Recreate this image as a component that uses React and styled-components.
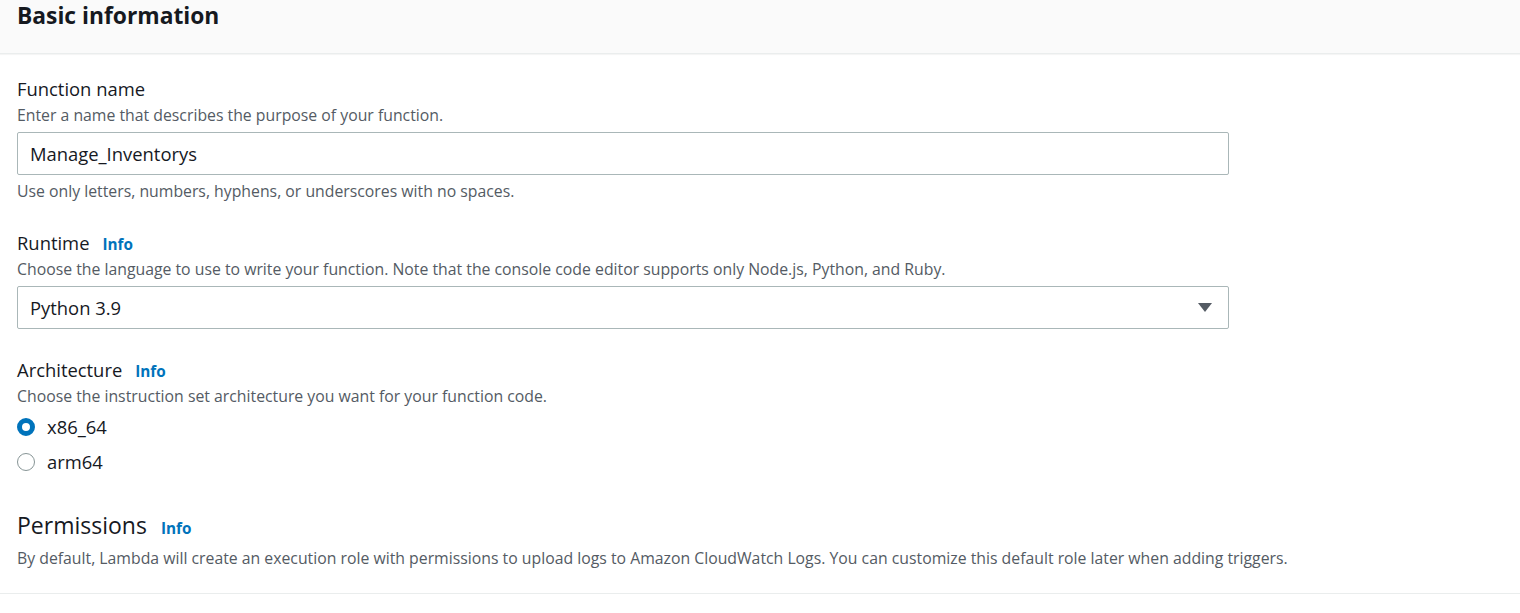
import styled, { createGlobalStyle } from "styled-components";

const Global = createGlobalStyle`
  body {
    margin: 0;
    background: #fff;
    font-family: "Open Sans", "Noto Sans", sans-serif;
    color: #16191f;
  }
`;

const Panel = styled.section`
  width: 1520px;
  border-bottom: 1px solid #eaeded;
`;

const Header = styled.header`
  height: 54px;
  background: #fafafa;
  border-bottom: 1px solid #eaeded;
  box-shadow: 0 1px 1px rgba(0, 0, 0, 0.04);
  padding: 0 17px;
  box-sizing: border-box;
`;

const Title = styled.h2`
  margin: 0;
  padding-top: 1px;
  font-size: 22.8px;
  font-weight: 700;
  line-height: 29px;
  color: #16191f;
`;

const Body = styled.div`
  padding: 22px 17px 25px;
  display: flex;
  flex-direction: column;
`;

const Field = styled.div`
  display: flex;
  flex-direction: column;
  margin-bottom: ${(p) => p.gap || 0}px;
`;

const LabelRow = styled.div`
  display: flex;
  align-items: baseline;
  gap: ${(p) => (p.big ? 14 : 13)}px;
`;

const Label = styled.label`
  font-size: ${(p) => (p.big ? 23 : 18.4)}px;
  line-height: ${(p) => (p.big ? 32 : 26)}px;
  color: #16191f;
`;

const Info = styled.a`
  font-size: 15.3px;
  font-weight: 700;
  color: #0073bb;
  text-decoration: none;
`;

const Hint = styled.div`
  font-size: 15.8px;
  line-height: 20px;
  color: #545b64;
  margin-top: ${(p) => p.top ?? 3}px;
`;

const Box = styled.div`
  margin-top: 7px;
  width: 1212px;
  height: 43px;
  box-sizing: border-box;
  border: 1px solid #aab7b8;
  border-radius: 2px;
  padding: 0 16px 0 12px;
  display: flex;
  align-items: center;
  justify-content: space-between;
  font-size: 18.4px;
  color: #16191f;
`;

const Radios = styled.div`
  display: flex;
  flex-direction: column;
  gap: 11px;
  margin-top: 9px;
`;

const RadioRow = styled.label`
  display: flex;
  align-items: center;
  gap: 12px;
  font-size: 18.4px;
  line-height: 24px;
  color: #16191f;
`;

const Dot = styled.span`
  width: 18px;
  height: 18px;
  box-sizing: border-box;
  border-radius: 50%;
  border: ${(p) => (p.on ? "5px solid #0073bb" : "1.5px solid #879596")};
  background: #fff;
`;

const Caret = () => (
  <svg width="14" height="9" viewBox="0 0 14 9">
    <path d="M0 0h14L7 9z" fill="#545b64" />
  </svg>
);

export default function App() {
  return (
    <>
      <Global />
      <Panel>
        <Header>
          <Title>Basic information</Title>
        </Header>
        <Body>
          <Field gap={29}>
            <Label>Function name</Label>
            <Hint>Enter a name that describes the purpose of your function.</Hint>
            <Box>Manage_Inventorys</Box>
            <Hint top={6}>Use only letters, numbers, hyphens, or underscores with no spaces.</Hint>
          </Field>
          <Field gap={28}>
            <LabelRow>
              <Label>Runtime</Label>
              <Info>Info</Info>
            </LabelRow>
            <Hint>
              Choose the language to use to write your function. Note that the console code editor
              supports only Node.js, Python, and Ruby.
            </Hint>
            <Box>
              Python 3.9
              <Caret />
            </Box>
          </Field>
          <Field gap={35}>
            <LabelRow>
              <Label>Architecture</Label>
              <Info>Info</Info>
            </LabelRow>
            <Hint>Choose the instruction set architecture you want for your function code.</Hint>
            <Radios>
              <RadioRow>
                <Dot on />
                x86_64
              </RadioRow>
              <RadioRow>
                <Dot />
                arm64
              </RadioRow>
            </Radios>
          </Field>
          <Field>
            <LabelRow big>
              <Label big>Permissions</Label>
              <Info>Info</Info>
            </LabelRow>
            <Hint top={7}>
              By default, Lambda will create an execution role with permissions to upload logs to
              Amazon CloudWatch Logs. You can customize this default role later when adding triggers.
            </Hint>
          </Field>
        </Body>
      </Panel>
    </>
  );
}
